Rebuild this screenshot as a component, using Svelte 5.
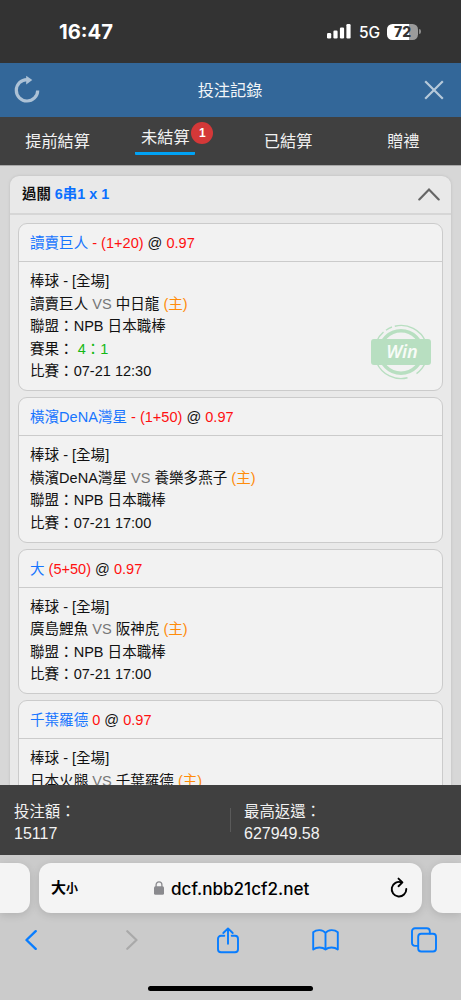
<script>
  const tabs = [
    { label: '提前結算' },
    { label: '未結算', active: true, badge: 1 },
    { label: '已結算' },
    { label: '贈禮' }
  ];

  const bets = [
    { pick: '讀賣巨人', line: '- (1+20)', odds: '0.97', away: '讀賣巨人', home: '中日龍', score: '4：1', time: '07-21 12:30', win: true },
    { pick: '橫濱DeNA灣星', line: '- (1+50)', odds: '0.97', away: '橫濱DeNA灣星', home: '養樂多燕子', time: '07-21 17:00' },
    { pick: '大', line: '(5+50)', odds: '0.97', away: '廣島鯉魚', home: '阪神虎', time: '07-21 17:00' },
    { pick: '千葉羅德', line: '0', odds: '0.97', away: '日本火腿', home: '千葉羅德' }
  ];
</script>

<div class="screen">
  <div class="status">
    <span class="clock">16:47</span>
    <div class="signals">
      <svg class="bars" width="24" height="15" viewBox="0 0 24 15" fill="#fff">
        <rect x="0" y="9" width="4.2" height="5.5" rx="1.2" />
        <rect x="6.4" y="6.5" width="4.2" height="8" rx="1.2" />
        <rect x="12.9" y="3.5" width="4.2" height="11" rx="1.2" />
        <rect x="19.4" y="0" width="4.2" height="14.5" rx="1.2" />
      </svg>
      <span class="network">5G</span>
      <div class="battery"><span>72</span></div>
      <i class="nub"></i>
    </div>
  </div>

  <header class="titlebar">
    <svg width="28" height="30" viewBox="0 0 28 30">
      <path d="M14 4.6A10.7 10.7 0 1 0 24.7 15.4" fill="none" stroke="#adc2d6" stroke-width="3.2" />
      <path d="M13.2 .8 19.3 5 13.2 9.5z" fill="#adc2d6" />
    </svg>
    <h1>投注記錄</h1>
    <svg width="20" height="20" viewBox="0 0 20 20">
      <path d="M1.2 1.2 18.8 18.8M18.8 1.2 1.2 18.8" stroke="#b6c9da" stroke-width="2.2" />
    </svg>
  </header>

  <nav class="tabs">
    {#each tabs as tab}
      <div class="tab" class:active={tab.active}>
        <span class="tab-label">{tab.label}{#if tab.badge}<b class="badge">{tab.badge}</b>{/if}</span>
      </div>
    {/each}
  </nav>

  <main class="content">
    <section class="parlay">
      <div class="parlay-head">
        <span>過關 <em>6串1 x 1</em></span>
        <svg width="22" height="13" viewBox="0 0 22 13">
          <path d="M1.3 11.4 11 1.6l9.7 9.8" fill="none" stroke="#666" stroke-width="2.2" stroke-linecap="round" />
        </svg>
      </div>
      <div class="bets">
        {#each bets as bet}
          <article class="bet">
            <div class="bet-head">
              <span class="blue">{bet.pick}</span> <span class="red">{bet.line}</span> @ <span class="red">{bet.odds}</span>
            </div>
            <div class="bet-body">
              <p>棒球 - [全場]</p>
              <p>{bet.away} <span class="grey">VS</span> {bet.home} <span class="orange">(主)</span></p>
              {#if bet.time}
                <p>聯盟：NPB 日本職棒</p>
                {#if bet.score}<p>賽果： <span class="green">{bet.score}</span></p>{/if}
                <p>比賽：{bet.time}</p>
              {/if}
              {#if bet.win}
                <div class="stamp">
                  <svg width="60" height="56" viewBox="0 0 60 56" fill="none" stroke="#b8dfc1">
                    <circle cx="30" cy="28" r="21.2" stroke-width="3.6" />
                    <path d="M5.8 17A26.6 26.6 0 0 1 12.5 8M15 6.2A26.6 26.6 0 0 1 21 3M23.8 2.2A26.6 26.6 0 0 1 54.8 18M54.6 38A26.6 26.6 0 0 1 45.5 49.6M36.5 53.8A26.6 26.6 0 0 1 5.8 39" stroke-width="1.4" />
                    <rect x="0" y="15" width="60" height="26" rx="3" fill="#b8dfc1" stroke="none" />
                  </svg>
                  <b>Win</b>
                </div>
              {/if}
            </div>
          </article>
        {/each}
      </div>
    </section>
  </main>

  <footer class="totals">
    <div class="total"><span>投注額：</span><strong>15117</strong></div>
    <i class="divider"></i>
    <div class="total"><span>最高返還：</span><strong>627949.58</strong></div>
  </footer>

  <div class="browser">
    <div class="address-row">
      <div class="side-tab left"></div>
      <div class="address">
        <span class="textsize">大<small>小</small></span>
        <div class="domain">
          <svg width="10" height="14" viewBox="0 0 10 14">
            <rect x="0" y="5.2" width="10" height="8.6" rx="1.5" fill="#8a8a8e" />
            <path d="M2.1 6.2V3.8a2.9 2.9 0 0 1 5.8 0v2.4" fill="none" stroke="#8a8a8e" stroke-width="1.3" />
          </svg>
          <span>dcf.nbb21cf2.net</span>
        </div>
        <svg width="18" height="22" viewBox="0 0 18 22" fill="none" stroke="#000" stroke-width="1.9" stroke-linecap="round" stroke-linejoin="round">
          <path d="M11.4 5.3A7.3 7.3 0 1 0 16.3 12" />
          <path d="M8.5 1.6 12.4 5.4 8.5 9.2" />
        </svg>
      </div>
      <div class="side-tab right"></div>
    </div>
    <div class="tools">
      <span><svg width="12" height="20" viewBox="0 0 12 20"><path d="M10.7 1.2 1.5 10l9.2 8.8" stroke="#087dff" stroke-width="2.4" /></svg></span>
      <span class="forward"><svg width="12" height="20" viewBox="0 0 12 20"><path d="M1.3 1.2 10.5 10l-9.2 8.8" stroke="#a9a9a9" stroke-width="2.2" /></svg></span>
      <span class="share"><svg width="22" height="27" viewBox="0 0 22 27"><path d="M7.3 8.8H4A3 3 0 0 0 1 11.8v10.4a3 3 0 0 0 3 3h14a3 3 0 0 0 3-3V11.8a3 3 0 0 0-3-3h-3.3M11 16.8V1.6M6.3 6 11 1.4 15.7 6" stroke="#087dff" stroke-width="1.9" /></svg></span>
      <span class="book"><svg width="27" height="22" viewBox="0 0 27 22"><path d="M13.5 4C11 .3 4.5.3 1.2 3.2v17.3c3.3-2.6 9.3-2.6 12.3 0 3-2.6 9-2.6 12.3 0V3.2C22.5.3 16 .3 13.5 4zM13.5 4v16.5" stroke="#087dff" stroke-width="1.9" /></svg></span>
      <span><svg width="26" height="26" viewBox="0 0 26 26"><rect x="7.2" y="6.7" width="17.8" height="17.8" rx="3" stroke="#087dff" stroke-width="1.9" /><path d="M7 18.9H4a3 3 0 0 1-3-3V4.2a3 3 0 0 1 3-3h11.8a3 3 0 0 1 3 3v2.3" stroke="#087dff" stroke-width="1.9" /></svg></span>
    </div>
    <div class="home"></div>
  </div>
</div>

<style>
  :global(body) { margin: 0; }
  .screen {
    width: 461px; height: 1000px; overflow: hidden;
    display: flex; flex-direction: column;
    font-family: "Liberation Sans", "Noto Sans CJK TC", sans-serif;
    background: #d7d7d7; color: #111;
  }
  .screen * { box-sizing: border-box; }
  svg { display: block; flex: none; }

  .status {
    flex: none; height: 63px; background: #333; color: #fff;
    display: flex; justify-content: space-between; align-items: center;
    padding: 0 40px 0 59px; font-family: Inter, sans-serif;
  }
  .clock { font-size: 20.2px; font-weight: 700; }
  .signals { display: flex; align-items: center; }
  .bars { margin-right: 8px; }
  .network { font-size: 15.5px; font-weight: 500; width: 28px; padding-top: 1px; }
  .battery {
    width: 31px; height: 16px; border-radius: 5.5px;
    background: linear-gradient(90deg, #fff 72%, #9b9b9b 72%);
    color: #333; font-size: 14px; font-weight: 800; line-height: 16px; text-align: center;
  }
  .nub { width: 2px; height: 5px; margin-left: 1px; border-radius: 0 2px 2px 0; background: #8b8b8b; }

  .titlebar {
    flex: none; height: 54px; background: #336799; color: #f1f5f8;
    display: grid; grid-template-columns: 28px 1fr 20px; align-items: center;
    padding: 0 17px 0 13px;
  }
  h1 { margin: 0; padding-right: 5px; font-size: 16.2px; font-weight: 400; line-height: 24px; text-align: center; }

  .tabs {
    flex: none; height: 48px; background: #404040; color: #f2f2f2;
    display: grid; grid-template-columns: repeat(4, 1fr);
    font-size: 16.2px; line-height: 24px;
  }
  .tab { display: flex; justify-content: center; align-items: flex-start; padding-top: 12px; }
  .tab.active { padding: 9px 15px 0 0; }
  .tab.active .tab-label { width: 60px; height: 29px; text-align: center; border-bottom: 3px solid #00a2f5; border-radius: 1px; line-height: 23px; }
  .tab-label { position: relative; }
  .badge {
    position: absolute; left: 56px; top: -4px; width: 22px; height: 22px; border-radius: 50%;
    background: #d43838; color: #fff; font-size: 12px; line-height: 22px; text-align: center;
  }

  .content { flex: none; height: 620px; overflow: hidden; padding: 10px 10px 0; background: #d7d7d7; border-top: 1px solid #a8a8a8; }
  .parlay { height: 700px; background: #e9e9e9; border-radius: 9px; box-shadow: 0 0 3px #bbb; }
  .parlay-head {
    height: 39px; border-bottom: 2px solid #d6d6d6;
    display: flex; align-items: center; justify-content: space-between;
    padding: 0 11px 0 12px; font-size: 14.4px; line-height: 20px; font-weight: 700;
  }
  .parlay-head span { margin-top: -2px; }
  .parlay-head em { color: #0b70ff; font-style: normal; }
  .bets { display: flex; flex-direction: column; gap: 6px; padding: 8px 8px 0; }
  .bet { border: 1px solid #cbcbcb; border-radius: 9px; background: #f2f2f2; font-size: 14.55px; }
  .bet-head { height: 38px; border-bottom: 1px solid #cbcbcb; padding-left: 11px; line-height: 38px; white-space: nowrap; }
  .bet-body { position: relative; padding: 8px 11px 7.5px; }
  p { margin: 0; height: 22.5px; line-height: 22.5px; white-space: nowrap; }
  .blue { color: #1675ff; }
  .red { color: #ff1010; }
  .grey { color: #777; }
  .orange { color: #ff8c0a; }
  .green { color: #14b814; }
  .stamp { position: absolute; right: 11px; top: 62px; width: 60px; height: 56px; }
  .stamp b {
    position: absolute; inset: 14px 0 auto 2px; text-align: center;
    color: #f7fbf7; font: italic 600 18px/27px "Noto Sans", sans-serif;
  }

  .totals {
    flex: none; height: 70px; background: #404040; color: #f2f2f2;
    display: grid; grid-template-columns: 216px 1px 1fr; align-items: center;
    padding-left: 14px;
  }
  .total { display: flex; flex-direction: column; font-size: 15.4px; line-height: 22px; padding-top: 5px; }
  .total strong { font-family: "Liberation Sans", sans-serif; font-weight: 400; font-size: 16px; line-height: 22px; }
  .divider { width: 1px; height: 24px; background: #5a5a5a; }
  .divider + .total { padding-left: 13px; }

  .browser { flex: 1; background: #cbcbcb; display: flex; flex-direction: column; font-family: Inter, "Noto Sans CJK TC", sans-serif; color: #000; }
  .address-row { display: flex; gap: 9px; height: 58px; padding-top: 8px; }
  .side-tab, .address { height: 50px; background: #f4f4f4; box-shadow: 0 2px 8px #0002; }
  .side-tab { width: 30px; }
  .left { border-radius: 0 12px 12px 0; }
  .right { border-radius: 12px 0 0 12px; }
  .address { width: 383px; border-radius: 12px; display: grid; grid-template-columns: 103px 1fr 18px; align-items: center; padding: 0 14px 0 12px; }
  .textsize { font-size: 15px; font-weight: 700; white-space: nowrap; line-height: 20px; }
  .textsize small { font-size: 12px; }
  .domain { display: flex; align-items: center; gap: 7px; font-size: 17.1px; font-weight: 500; }
  .tools { height: 54px; display: flex; justify-content: space-between; align-items: center; padding: 0 24px 0 18px; fill: none; stroke-linecap: round; stroke-linejoin: round; }
  .tools span { width: 26px; display: flex; justify-content: center; }
  .tools .forward { padding-left: 5px; }
  .tools .share { padding-left: 1px; }
  .tools .book { width: 27px; }
  .home { width: 165px; height: 5px; border-radius: 3px; background: #000; margin: 19px auto 0; }
</style>
